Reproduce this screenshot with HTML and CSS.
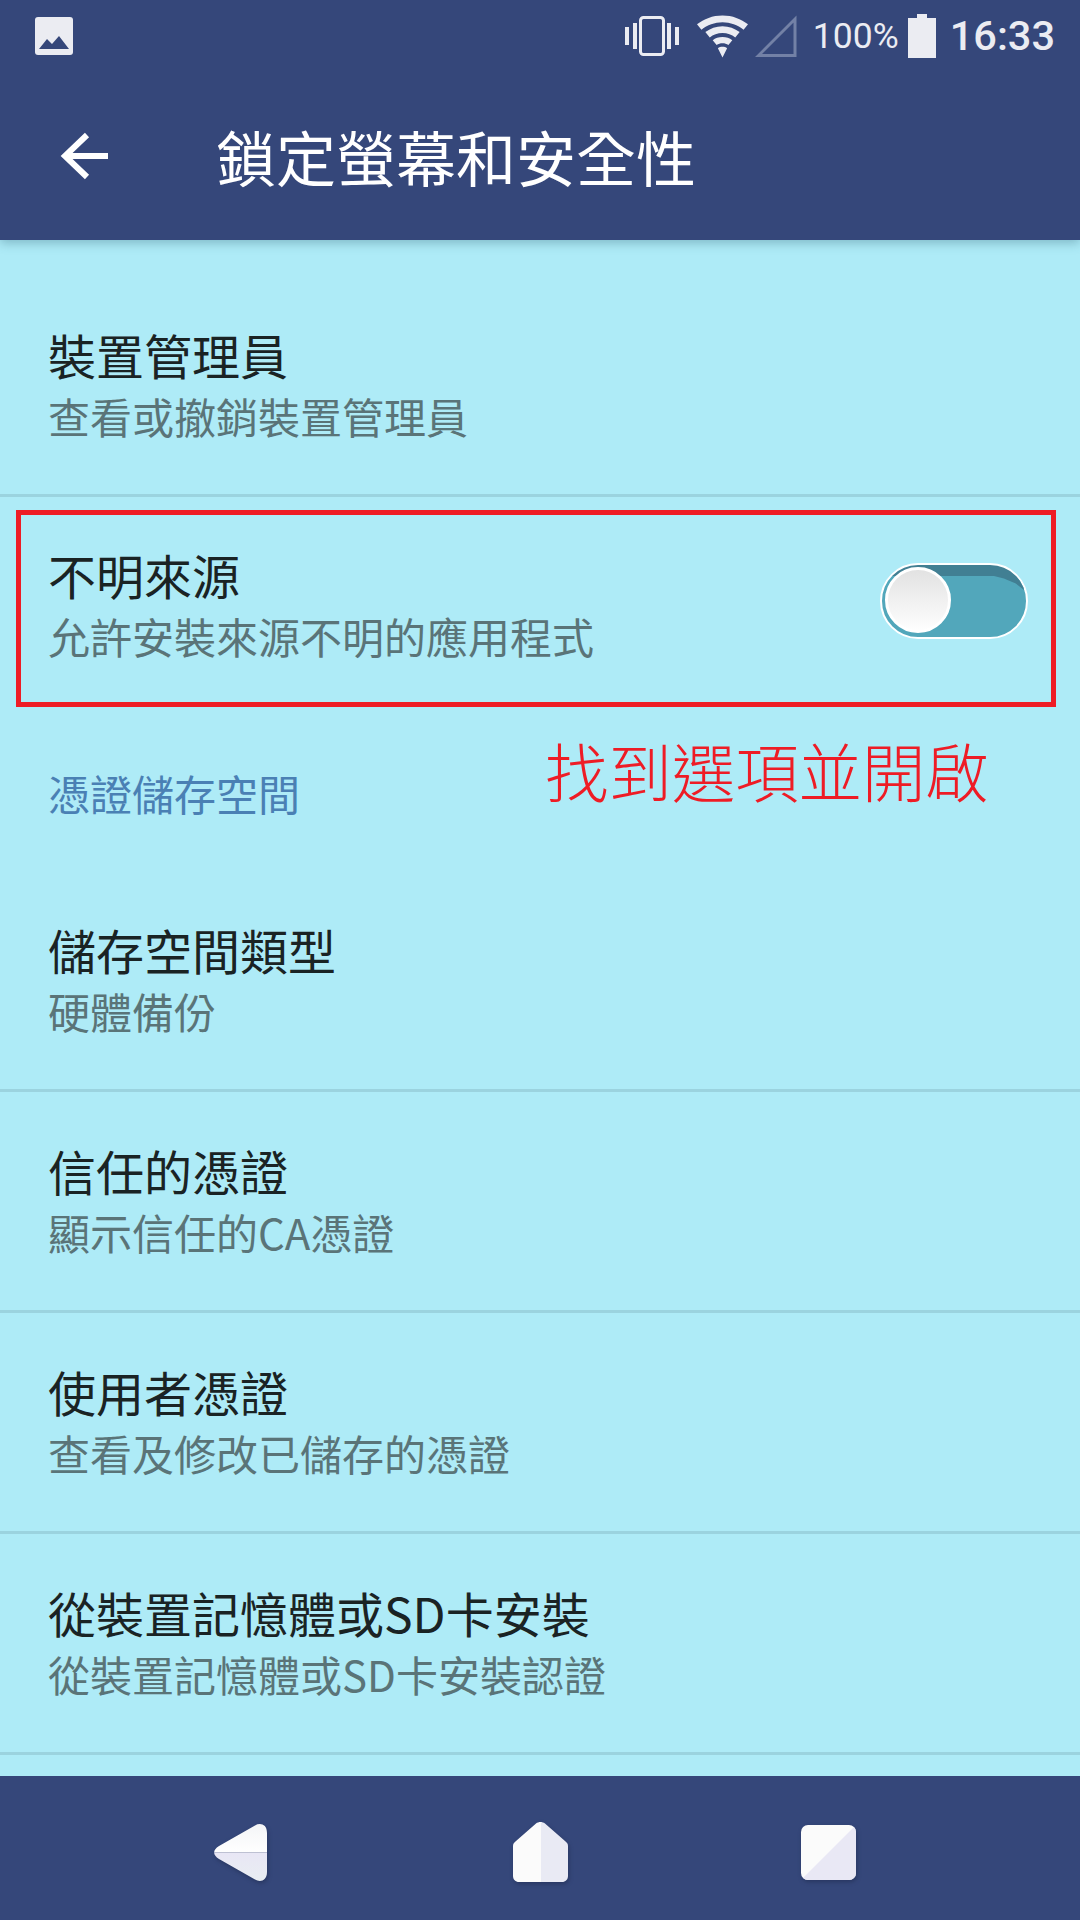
FILE: index.html
```html
<!DOCTYPE html>
<html lang="zh-Hant">
<head>
<meta charset="utf-8">
<title>鎖定螢幕和安全性</title>
<link rel="stylesheet" href="styles.css">
</head>
<body>
<div class="screen">
  <header class="appbar">
    <div class="status">
      <svg class="ic-pic" viewBox="0 0 38 38"><rect width="38" height="38" rx="3" fill="#ebecf2"/><path d="M4 32 L12 22 L17 27 L24 19 L34 32 Z" fill="#35477a"/></svg>
      <div class="status-right">
        <svg class="ic-vib" viewBox="0 0 54 40"><path d="M0 11h4v18H0zM8 7h4v26H8zM42 7h4v26h-4zM50 11h4v18h-4z" fill="#ebecf2"/><rect x="15.500" y="1.500" width="23" height="37" rx="3" fill="none" stroke="#ebecf2" stroke-width="3"/></svg>
        <svg class="ic-wifi" viewBox="0 0 52 43"><path d="M26 0C16 0 7 3.500 0 9L4.500 14.500C10.500 10 18 7 26 7S41.500 10 47.500 14.500L52 9C45 3.500 36 0 26 0Z M26 11C19.500 11 13.500 13.200 8.500 17L13 22.500C16.500 19.800 21 18 26 18S35.500 19.800 39 22.500L43.500 17C38.500 13.200 32.500 11 26 11Z M26 22C22 22 18.800 23.200 16 25.300L20 30.200C21.700 29 23.800 28.500 26 28.500S30.300 29 32 30.200L36 25.300C33.200 23.200 30 22 26 22Z M26 32C24.300 32 22.500 32.500 21.300 33.500L26 43L30.700 33.500C29.500 32.500 27.700 32 26 32Z" fill="#ebecf2"/></svg>
        <svg class="ic-sig" viewBox="0 0 42 42"><path d="M40 4V40.500H3.500Z" fill="none" stroke="#7381a6" stroke-width="3"/></svg>
        <span class="pct">100%</span>
        <svg class="ic-bat" viewBox="0 0 28 44"><path d="M9 0h10v4h9v40H0V4h9z" fill="#ebecf2"/></svg>
        <span class="clock">16:33</span>
      </div>
    </div>
    <div class="toolbar">
      <svg class="ic-back" viewBox="0 0 48 48"><path d="M48 24H5M27 3 5 24l22 21" fill="none" stroke="#fff" stroke-width="6"/></svg>
      <h1 class="page-title">鎖定螢幕和安全性</h1>
    </div>
  </header>

  <main class="content">
    <div class="row">
      <div class="row-text"><div class="t">裝置管理員</div><div class="s">查看或撤銷裝置管理員</div></div>
    </div>
    <div class="row row-plain">
      <div class="row-text"><div class="t">不明來源</div><div class="s">允許安裝來源不明的應用程式</div></div>
      <div class="switch"><div class="knob"></div></div>
    </div>
    <div class="section">憑證儲存空間</div>
    <div class="row">
      <div class="row-text"><div class="t">儲存空間類型</div><div class="s">硬體備份</div></div>
    </div>
    <div class="row">
      <div class="row-text"><div class="t">信任的憑證</div><div class="s">顯示信任的CA憑證</div></div>
    </div>
    <div class="row">
      <div class="row-text"><div class="t">使用者憑證</div><div class="s">查看及修改已儲存的憑證</div></div>
    </div>
    <div class="row">
      <div class="row-text"><div class="t">從裝置記憶體或SD卡安裝</div><div class="s">從裝置記憶體或SD卡安裝認證</div></div>
    </div>
    <div class="callout-box"></div>
    <div class="callout-text">找到選項並開啟</div>
  </main>

  <nav class="navbar">
    <svg class="nav-icon nav-back" viewBox="0 0 53 57">
      <defs>
        <linearGradient id="gw" x1="0" y1="0" x2="0" y2="1"><stop offset="0" stop-color="#f4f5f7"/><stop offset="1" stop-color="#ffffff"/></linearGradient>
        <linearGradient id="gl" x1="0" y1="0" x2="0" y2="1"><stop offset="0" stop-color="#e8e6f5"/><stop offset="1" stop-color="#e9eef2"/></linearGradient>
        <clipPath id="cb"><path d="M41 1.500C46 -1.500 53 0 53 9V48C53 57 46 58.500 41 55.500L5 35C-1.500 31 -1.500 26 5 22Z"/></clipPath>
        <clipPath id="ch"><path d="M23 1.500C25.500 -.5 29.500 -.5 32 1.500L52 19C54 20.500 55 22 55 24V54C55 57.500 52.500 60 49 60H6C2.500 60 0 57.500 0 54V24C0 22 1 20.500 3 19Z"/></clipPath>
        <clipPath id="cr"><rect width="55" height="55" rx="7"/></clipPath>
      </defs>
      <g clip-path="url(#cb)"><rect width="53" height="28.500" fill="url(#gw)"/><rect y="28.500" width="53" height="28.500" fill="url(#gl)"/></g>
    </svg>
    <svg class="nav-icon nav-home" viewBox="0 0 55 60">
      <g clip-path="url(#ch)"><rect width="28" height="60" fill="#fbfbfb"/><rect x="28" width="27" height="60" fill="#e9eaf4"/></g>
    </svg>
    <svg class="nav-icon nav-recent" viewBox="0 0 55 55">
      <g clip-path="url(#cr)"><rect width="55" height="55" fill="#fbfbfb"/><path d="M55 0V55H0Z" fill="#e9e8f5"/></g>
    </svg>
  </nav>
</div>
</body>
</html>
```

FILE: styles.css
```css
* { box-sizing: border-box; }
html, body { margin: 0; padding: 0; }
body { font-family: "Noto Sans CJK TC", Roboto, sans-serif; background: #aeebf7; }
.screen { width: 1080px; height: 1920px; display: flex; flex-direction: column; overflow: hidden; background: #aeebf7; }

.appbar { height: 240px; flex: none; background: #35477a; box-shadow: 0 3px 10px rgba(40, 90, 110, .35); position: relative; z-index: 2; }
.status { height: 72px; display: flex; align-items: center; justify-content: space-between; padding: 0 25px 0 35px; }
.ic-pic { width: 38px; height: 38px; margin-top: -1px; }
.status-right { display: flex; align-items: center; }
.ic-vib { width: 54px; height: 40px; margin-right: 18px; }
.ic-wifi { width: 51px; height: 43px; margin-right: 7px; }
.ic-sig { width: 42px; height: 42px; margin-right: 16px; }
.ic-bat { width: 28px; height: 44px; margin-left: 9px; margin-right: 14px; margin-top: -1px; }
.pct { font: 400 35.500px/44px Roboto, sans-serif; color: #ebecf2; }
.clock { font: 500 41.500px/44px Roboto, sans-serif; color: #ebecf2; }
.toolbar { height: 168px; display: flex; align-items: center; padding-left: 60px; }
.ic-back { width: 48px; height: 48px; flex: none; }
.page-title { margin: 0 0 0 108px; font-size: 60px; font-weight: 400; line-height: 80px; color: #fff; }

.content { flex: 1; position: relative; padding-top: 36px; min-height: 0; }
.row { height: 221px; padding: 0 48px; display: flex; align-items: center; justify-content: space-between; border-bottom: 3px solid #9bd3df; }
.row-plain { height: 222px; border-bottom: 0; padding-bottom: 6px; }
.t { font-size: 48px; line-height: 60px; color: #1a2324; }
.s { margin-top: 2px; font-size: 42px; line-height: 60px; color: #5a7478; }
.section { height: 152px; padding: 44px 48px 0; font-size: 42px; line-height: 60px; color: #4a80b4; }

.switch { width: 148px; height: 76px; margin: 0 4px 9px auto; border: 2px solid #fff; border-radius: 38px; background: linear-gradient(#417f93 0 11px, #52a7bb 11px); position: relative; overflow: hidden; box-shadow: inset 0 -2px 0 #52a7bb; flex: none; }
.switch::after { content: ""; position: absolute; right: 0; top: 11px; width: 34px; height: 16px; background: #417f93; border-bottom-left-radius: 100% 0; clip-path: polygon(0 0, 100% 0, 100% 100%, 70% 50%, 35% 18%); }
.knob { position: absolute; left: 3px; top: 2px; width: 66px; height: 66px; border-radius: 50%; border: 3px solid #fff; background: linear-gradient(#e2e2e2, #fefefe); }

.callout-box { position: absolute; left: 16px; top: 270px; width: 1040px; height: 197px; border: 5px solid #ee1c25; }
.callout-text { position: absolute; left: 545px; top: 485px; font-size: 63.400px; line-height: 88px; font-weight: 300; color: #ee1c25; white-space: nowrap; }

.navbar { height: 144px; flex: none; background: #35477a; display: flex; align-items: center; padding-top: 8px; }
.nav-icon { flex: none; filter: drop-shadow(1px 2px 2px rgba(20, 30, 60, .4)); }
.nav-back { width: 53px; height: 57px; margin-left: 214px; }
.nav-home { width: 55px; height: 60px; margin-left: 246px; }
.nav-recent { width: 55px; height: 55px; margin-left: 233px; }
```
